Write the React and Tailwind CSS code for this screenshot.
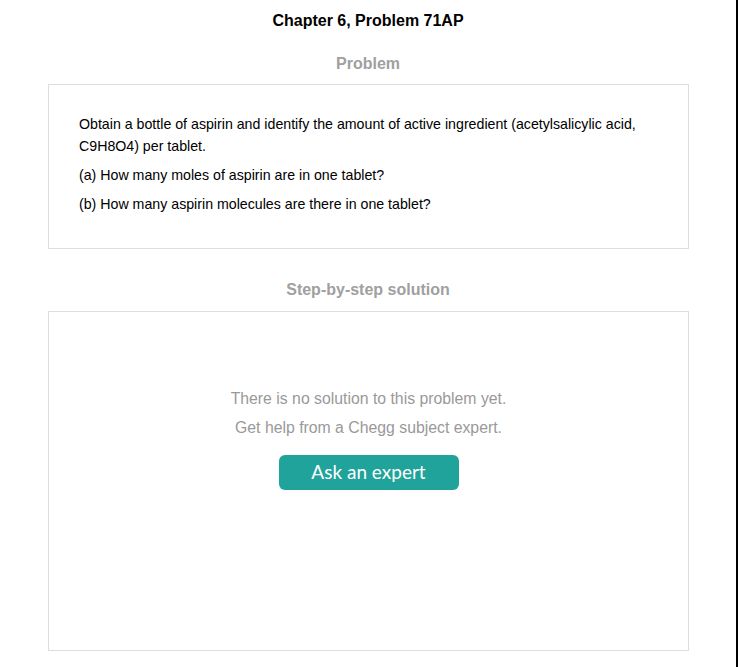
export default function App() {
  return (
    <div className="flex min-h-[667px] bg-white font-['Liberation_Sans',Arial,sans-serif]">
      <div className="w-[736px] pt-[12px]">
        <h1 className="text-center text-[16px] leading-[18px] font-bold text-black">
          Chapter 6, Problem 71AP
        </h1>

        <h2 className="mt-[25px] text-center text-[16px] leading-[18px] font-bold text-[#a0a0a0]">
          Problem
        </h2>
        <div className="ml-[48px] mt-[11px] w-[641px] border border-[#dddddd] pl-[30px] pr-[30px] pt-[28px] pb-[33px] text-[14.2px] leading-[22px] text-black">
          <p>
            Obtain a bottle of aspirin and identify the amount of active ingredient (acetylsalicylic acid,
            C9H8O4) per tablet.
          </p>
          <p className="mt-[7px]">(a) How many moles of aspirin are in one tablet?</p>
          <p className="mt-[7px]">(b) How many aspirin molecules are there in one tablet?</p>
        </div>

        <h2 className="mt-[32px] text-center text-[16px] leading-[18px] font-bold text-[#a0a0a0]">
          Step-by-step solution
        </h2>
        <div className="ml-[48px] mt-[12px] flex h-[340px] w-[641px] flex-col items-center border border-[#dddddd] pt-[76px]">
          <p className="text-[15.8px] leading-[22px] text-[#999999]">There is no solution to this problem yet.</p>
          <p className="mt-[7px] text-[15.8px] leading-[22px] text-[#999999]">Get help from a Chegg subject expert.</p>
          <button className="mt-[16px] h-[35px] w-[180px] rounded-[6px] bg-[#20a39a] font-['Lato',sans-serif] text-[19px] text-white">
            Ask an expert
          </button>
        </div>
      </div>
      <div className="w-[2px] bg-black" />
    </div>
  );
}
